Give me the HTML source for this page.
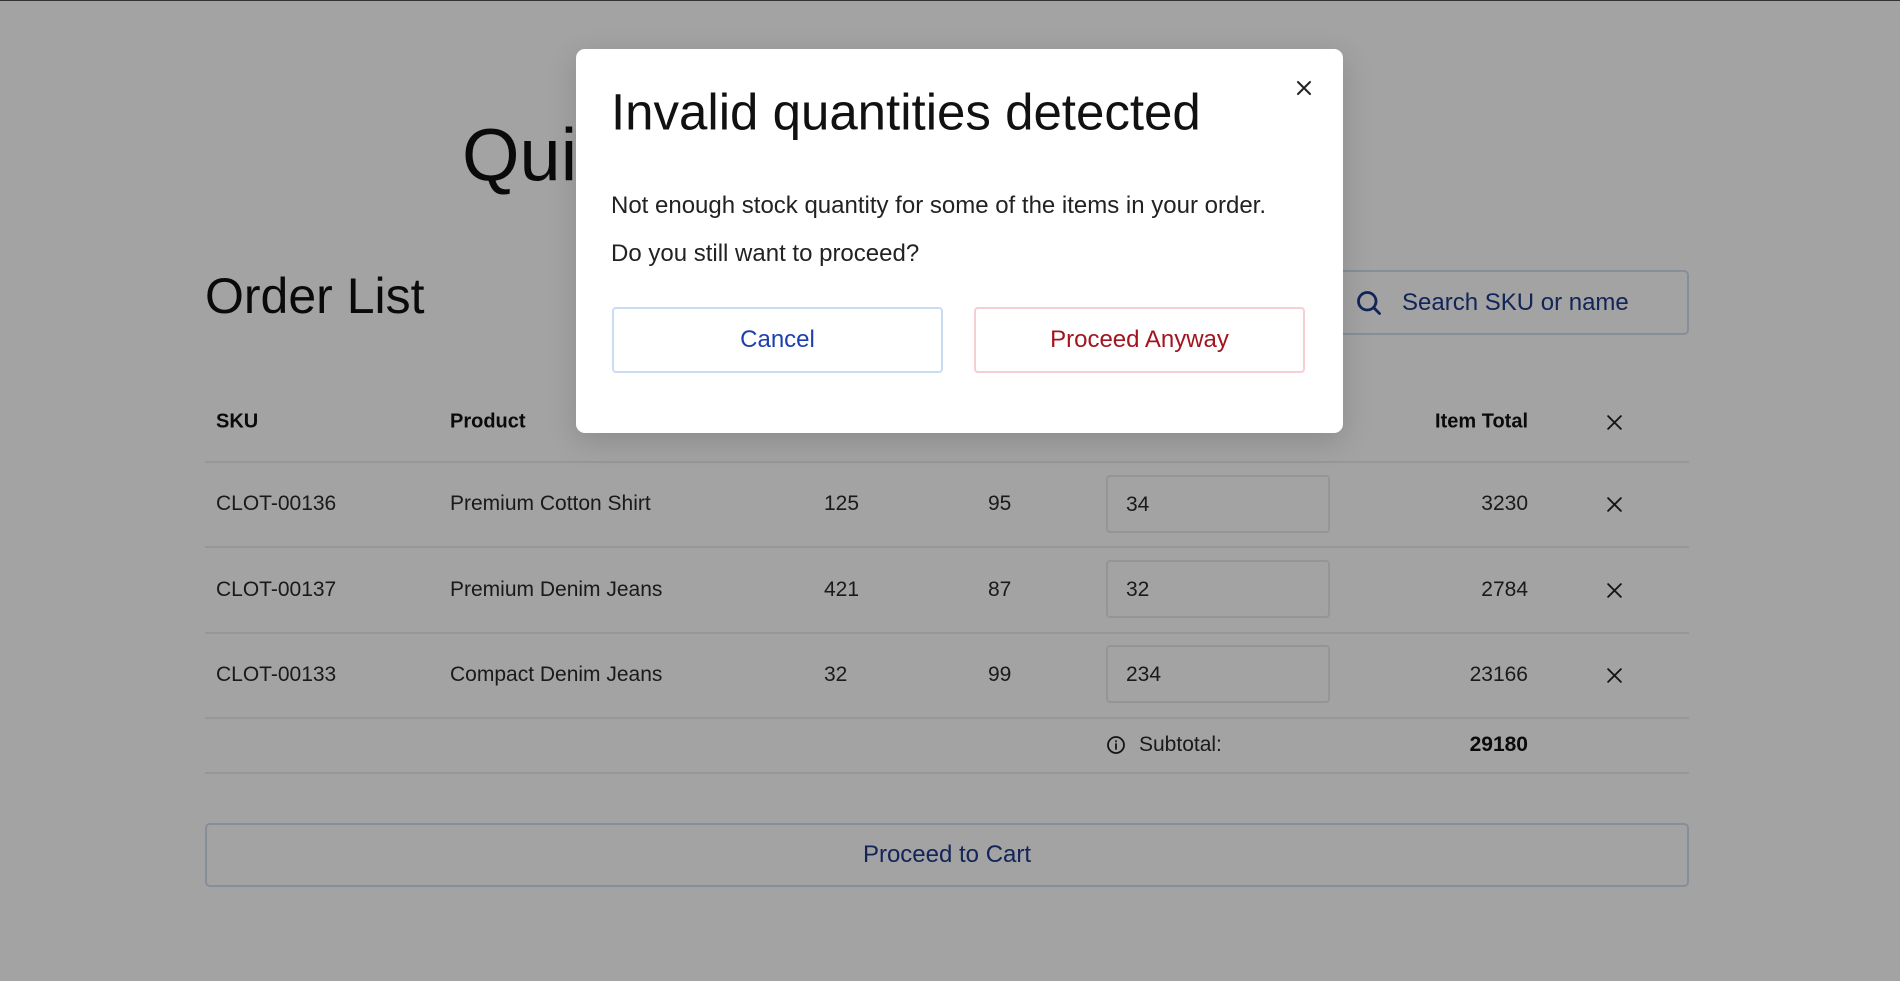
<!DOCTYPE html>
<html><head><meta charset="utf-8"><style>
*{box-sizing:border-box;margin:0;padding:0}
html,body{width:1900px;height:981px;overflow:hidden;background:#fff;font-family:"Liberation Sans",sans-serif;color:#111}
.abs{position:absolute}
.top{position:absolute;left:0;top:0;width:1900px;height:1px;background:#333;z-index:5}
.th{font-weight:bold;font-size:20px;color:#111}
.td{font-size:21px;color:#2a2a2a}
.line{position:absolute;left:205px;width:1484px;height:2px;background:#ebedf0}
.qty{position:absolute;left:1106px;width:224px;height:58px;border:2px solid #e8eaee;border-radius:4px;font-size:21px;color:#2a2a2a;padding-left:18px;line-height:56px}
.x{position:absolute;left:1606px}
.ov{position:absolute;left:0;top:0;width:1900px;height:981px;background:rgba(0,0,0,0.36)}
.modal{position:absolute;left:576px;top:49px;width:767px;height:384px;background:#fff;border-radius:9px;box-shadow:0 8px 30px rgba(0,0,0,.15)}
.btn{position:absolute;top:258px;height:66px;width:331px;border-radius:4px;font-size:24px;text-align:center;line-height:62px;background:#fff}
.c{transform:translateY(-50%)}
</style></head><body>
<div class="top"></div>
<div class="abs c" style="left:462px;top:155px;font-size:74px;color:#111">Quick Order</div>
<div class="abs c" style="left:205px;top:296px;font-size:50px;color:#111">Order List</div>
<div class="abs" style="left:1300px;top:270px;width:389px;height:65px;border:2px solid #d3dff1;border-radius:5px"></div>
<svg class="abs" style="left:1355px;top:289px" width="28" height="28" viewBox="0 0 24 24" fill="none" stroke="#1e3a8a" stroke-width="2.4" stroke-linecap="round"><circle cx="10.5" cy="10.5" r="7.5"/><path d="M16 16l5 5"/></svg>
<div class="abs c" style="left:1402px;top:303px;font-size:24px;color:#1e3a8a">Search SKU or name</div>

<div class="abs c th" style="left:216px;top:422px">SKU</div>
<div class="abs c th" style="left:450px;top:422px">Product</div>
<div class="abs c th" style="left:1106px;top:422px">Quantity</div>
<div class="abs c th" style="right:372px;top:422px">Item Total</div>
<svg class="x" style="top:414px" width="17" height="17" viewBox="0 0 16 16" stroke="#222" stroke-width="1.8" stroke-linecap="round"><path d="M2 2l12 12M14 2L2 14"/></svg>
<div class="line" style="top:461px"></div>

<div class="abs c td" style="left:216px;top:504px">CLOT-00136</div>
<div class="abs c td" style="left:450px;top:504px">Premium Cotton Shirt</div>
<div class="abs c td" style="left:824px;top:504px">125</div>
<div class="abs c td" style="left:988px;top:504px">95</div>
<div class="qty" style="top:475px">34</div>
<div class="abs c td" style="right:372px;top:504px">3230</div>
<svg class="x" style="top:496px" width="17" height="17" viewBox="0 0 16 16" stroke="#222" stroke-width="1.8" stroke-linecap="round"><path d="M2 2l12 12M14 2L2 14"/></svg>
<div class="line" style="top:546px"></div>

<div class="abs c td" style="left:216px;top:590px">CLOT-00137</div>
<div class="abs c td" style="left:450px;top:590px">Premium Denim Jeans</div>
<div class="abs c td" style="left:824px;top:590px">421</div>
<div class="abs c td" style="left:988px;top:590px">87</div>
<div class="qty" style="top:560px">32</div>
<div class="abs c td" style="right:372px;top:590px">2784</div>
<svg class="x" style="top:582px" width="17" height="17" viewBox="0 0 16 16" stroke="#222" stroke-width="1.8" stroke-linecap="round"><path d="M2 2l12 12M14 2L2 14"/></svg>
<div class="line" style="top:632px"></div>

<div class="abs c td" style="left:216px;top:675px">CLOT-00133</div>
<div class="abs c td" style="left:450px;top:675px">Compact Denim Jeans</div>
<div class="abs c td" style="left:824px;top:675px">32</div>
<div class="abs c td" style="left:988px;top:675px">99</div>
<div class="qty" style="top:645px">234</div>
<div class="abs c td" style="right:372px;top:675px">23166</div>
<svg class="x" style="top:667px" width="17" height="17" viewBox="0 0 16 16" stroke="#222" stroke-width="1.8" stroke-linecap="round"><path d="M2 2l12 12M14 2L2 14"/></svg>
<div class="line" style="top:717px"></div>

<svg class="abs" style="left:1106px;top:735px" width="20" height="20" viewBox="0 0 20 20" fill="none" stroke="#222" stroke-width="1.8"><circle cx="10" cy="10" r="8"/><path d="M10 9v5M10 6v.5" stroke-linecap="round"/></svg>
<div class="abs c td" style="left:1139px;top:745px">Subtotal:</div>
<div class="abs c" style="right:372px;top:745px;font-size:21px;font-weight:bold;color:#111">29180</div>
<div class="line" style="top:772px"></div>

<div class="abs" style="left:205px;top:823px;width:1484px;height:64px;border:2px solid #d3dff1;border-radius:5px;text-align:center;line-height:60px;font-size:24px;color:#1e3a8a">Proceed to Cart</div>

<div class="ov"></div>
<div class="modal">
  <div class="abs c" style="left:35px;top:63px;font-size:51px;color:#111">Invalid quantities detected</div>
  <svg class="abs" style="left:720px;top:31px" width="16" height="16" viewBox="0 0 16 16" stroke="#222" stroke-width="2" stroke-linecap="round"><path d="M2 2l12 12M14 2L2 14"/></svg>
  <div class="abs c" style="left:35px;top:157px;font-size:24px;color:#222">Not enough stock quantity for some of the items in your order.</div>
  <div class="abs c" style="left:35px;top:205px;font-size:24px;color:#222">Do you still want to proceed?</div>
  <div class="btn" style="left:36px;border:2px solid #c9dcf3;color:#1e40af">Cancel</div>
  <div class="btn" style="left:398px;border:2px solid #f5cfd4;color:#a3141f">Proceed Anyway</div>
</div>
</body></html>
